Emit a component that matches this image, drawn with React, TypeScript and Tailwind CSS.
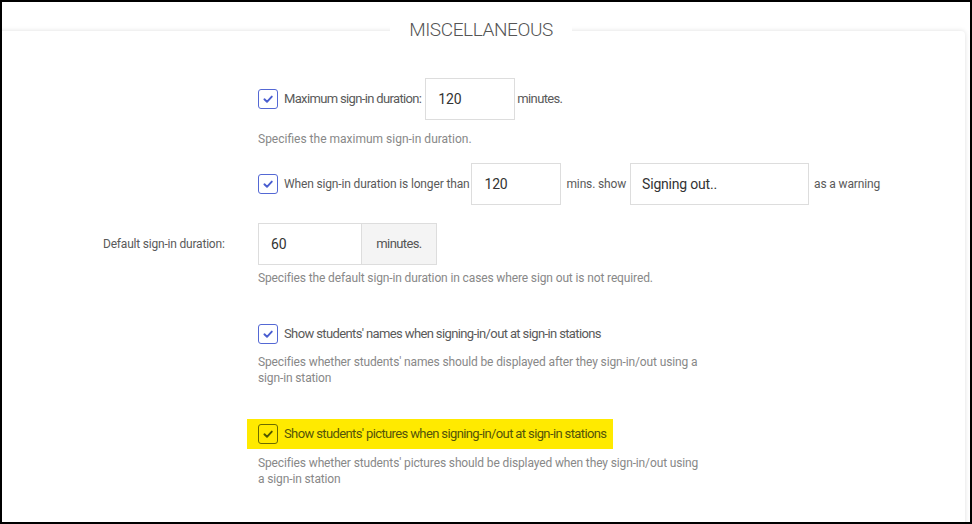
import React from "react";

function Check({ hl = false }: { hl?: boolean }) {
  return (
    <span
      className={
        "flex h-[20px] w-[20px] shrink-0 items-center justify-center rounded-[3px] border " +
        (hl ? "border-[#6b6b00]" : "border-[#5468d4]")
      }
    >
      <svg width="12" height="12" viewBox="0 0 12 12" fill="none">
        <path
          d="M2.4 6.3 L5 8.8 L9.8 3.6"
          stroke={hl ? "#4f5700" : "#4a5ed0"}
          strokeWidth="1.9"
          strokeLinecap="round"
          strokeLinejoin="round"
        />
      </svg>
    </span>
  );
}

export default function App() {
  return (
    <div
      className="relative h-[524px] w-[972px] overflow-hidden border-2 border-black bg-white"
      style={{ fontFamily: "Roboto, 'Liberation Sans', sans-serif" }}
    >
      <div className="ml-[-10px] mr-[5px] mt-[29px] h-[600px] rounded-[4px] bg-white shadow-[0_0_5px_rgba(0,0,0,0.13)]">
        <div className="pl-[111px] pt-[47px]">
          {/* Row 1 */}
          <div className="ml-[155px] flex h-[42px] items-center text-[13px] tracking-[-0.65px] text-[#5a5a5a]">
            <Check />
            <span className="ml-[6px]">Maximum sign-in duration:</span>
            <div className="ml-[4px] flex h-[42px] w-[90px] items-center border border-[#ddd] pl-[12px] text-[14px] tracking-[-0.2px] text-[#333]">
              120
            </div>
            <span className="ml-[2px]">minutes.</span>
          </div>
          <div className="ml-[155px] mt-[11px] text-[12px] leading-[16px] text-[#888]">
            Specifies the maximum sign-in duration.
          </div>

          {/* Row 2 */}
          <div className="ml-[155px] mt-[16px] flex h-[42px] items-center text-[12px] tracking-[-0.15px] text-[#5a5a5a]">
            <Check />
            <span className="ml-[6px]">When sign-in duration is longer than</span>
            <div className="ml-[2px] flex h-[42px] w-[90px] items-center border border-[#ddd] pl-[12px] text-[14px] tracking-[-0.2px] text-[#333]">
              120
            </div>
            <span className="ml-[5px]">mins. show</span>
            <div className="ml-[4px] flex h-[42px] w-[179px] items-center border border-[#ddd] pl-[11px] text-[14px] tracking-[-0.2px] text-[#333]">
              Signing out..
            </div>
            <span className="ml-[5px]">as a warning</span>
          </div>

          {/* Row 3 */}
          <div className="mt-[18px] flex h-[42px] items-center">
            <div className="w-[155px] text-[12px] tracking-[-0.2px] text-[#5a5a5a]">Default sign-in duration:</div>
            <div className="flex h-[42px]">
              <div className="flex w-[104px] items-center border border-[#ddd] pl-[12px] text-[14px] tracking-[-0.2px] text-[#333]">
                60
              </div>
              <div className="flex w-[75px] items-center justify-center border border-l-0 border-[#ddd] bg-[#f4f4f4] text-[13px] tracking-[-0.6px] text-[#555]">
                minutes.
              </div>
            </div>
          </div>
          <div className="ml-[155px] mt-[5px] text-[12px] leading-[16px] tracking-[-0.13px] text-[#888]">
            Specifies the default sign-in duration in cases where sign out is not required.
          </div>

          {/* Row 4 */}
          <div className="ml-[155px] mt-[38px] flex h-[20px] items-center text-[13px] tracking-[-0.62px] text-[#5a5a5a]">
            <Check />
            <span className="ml-[6px]">Show students' names when signing-in/out at sign-in stations</span>
          </div>
          <div className="ml-[155px] mt-[10px] w-[446px] text-[12px] leading-[16px] tracking-[-0.13px] text-[#888]">
            Specifies whether students' names should be displayed after they sign-in/out using a sign-in station
          </div>

          {/* Row 5 */}
          <div className="ml-[144px] mt-[33px] flex">
            <div className="flex h-[30px] items-center bg-[#ffea00] pl-[11px] pr-[7px] text-[13px] tracking-[-0.62px] text-[#55550a]">
              <Check hl />
              <span className="ml-[6px]">Show students' pictures when signing-in/out at sign-in stations</span>
            </div>
          </div>
          <div className="ml-[155px] mt-[6px] w-[446px] text-[12px] leading-[16px] tracking-[-0.13px] text-[#888]">
            Specifies whether students' pictures should be displayed when they sign-in/out using a sign-in station
          </div>
        </div>
      </div>
      <div className="absolute left-[388px] top-[16px] w-[182px] bg-white text-center text-[19px] font-light leading-[24px] tracking-[-0.4px] text-[#555]">
        MISCELLANEOUS
      </div>
    </div>
  );
}
